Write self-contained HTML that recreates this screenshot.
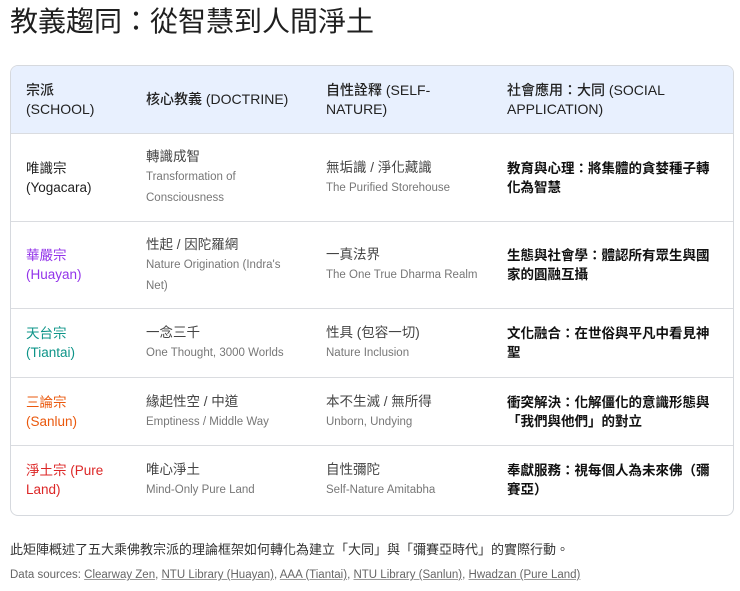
<!DOCTYPE html>
<html><head><meta charset="utf-8"><style>
body{margin:0;background:#fff;font-family:"Liberation Sans","Noto Sans CJK TC",sans-serif;color:#1f1f1f;width:740px;height:591px;overflow:hidden;position:relative}
h1{position:absolute;left:10px;top:3px;margin:0;font-size:28px;font-weight:400;font-family:"Liberation Sans","Noto Sans CJK TC",sans-serif;line-height:38px;white-space:nowrap}
.box{position:absolute;left:10px;top:65px;width:722px;height:449px;border:1px solid #d6d9de;border-radius:8px;overflow:hidden}
table{border-collapse:collapse;width:100%;table-layout:fixed}
td,th{padding:0 4px 0 15px;text-align:left;vertical-align:middle;font-size:13.5px;line-height:19px;border-bottom:1px solid #dadce0}
td:last-child,th:last-child{padding-right:21px}
th{background:#e8f0fe;font-weight:500;height:67px;color:#222;font-size:14px}
tr:last-child td{border-bottom:none}
.s{font-size:11.5px;color:#777;line-height:19px;white-space:nowrap}
.m{color:#444}
.b{font-weight:700;color:#111}
.p{color:#9333ea}.t{color:#0d9488}.o{color:#ea580c}.r{color:#dc2626}
.note{position:absolute;left:10px;top:539px;font-size:13px;color:#333}
.src{position:absolute;left:10px;top:569px;font-size:11.5px;color:#666}
.src u{text-decoration-color:#999}
</style></head><body>
<h1>教義趨同：從智慧到人間淨土</h1>
<div class="box"><table>
<colgroup><col style="width:120px"><col style="width:180px"><col style="width:181px"><col></colgroup>
<tr><th>宗派<br>(SCHOOL)</th><th>核心教義 (DOCTRINE)</th><th>自性詮釋 (SELF-<br>NATURE)</th><th>社會應用：大同 (SOCIAL<br>APPLICATION)</th></tr>
<tr style="height:88px"><td>唯識宗<br>(Yogacara)</td><td><span class="m">轉識成智</span><br><span class="s">Transformation of<br>Consciousness</span></td><td><span class="m">無垢識 / 淨化藏識</span><br><span class="s">The Purified Storehouse</span></td><td class="b">教育與心理：將集體的貪婪種子轉化為智慧</td></tr>
<tr style="height:87px"><td class="p">華嚴宗<br>(Huayan)</td><td><span class="m">性起 / 因陀羅網</span><br><span class="s">Nature Origination (Indra's<br>Net)</span></td><td><span class="m">一真法界</span><br><span class="s">The One True Dharma Realm</span></td><td class="b">生態與社會學：體認所有眾生與國家的圓融互攝</td></tr>
<tr style="height:69px"><td class="t">天台宗<br>(Tiantai)</td><td><span class="m">一念三千</span><br><span class="s">One Thought, 3000 Worlds</span></td><td><span class="m">性具 (包容一切)</span><br><span class="s">Nature Inclusion</span></td><td class="b">文化融合：在世俗與平凡中看見神聖</td></tr>
<tr style="height:68px"><td class="o">三論宗<br>(Sanlun)</td><td><span class="m">緣起性空 / 中道</span><br><span class="s">Emptiness / Middle Way</span></td><td><span class="m">本不生滅 / 無所得</span><br><span class="s">Unborn, Undying</span></td><td class="b">衝突解決：化解僵化的意識形態與「我們與他們」的對立</td></tr>
<tr style="height:68px"><td class="r">淨土宗 (Pure<br>Land)</td><td><span class="m">唯心淨土</span><br><span class="s">Mind-Only Pure Land</span></td><td><span class="m">自性彌陀</span><br><span class="s">Self-Nature Amitabha</span></td><td class="b">奉獻服務：視每個人為未來佛（彌賽亞）</td></tr>
</table></div>
<div class="note">此矩陣概述了五大乘佛教宗派的理論框架如何轉化為建立「大同」與「彌賽亞時代」的實際行動。</div>
<div class="src">Data sources: <u>Clearway Zen</u>, <u>NTU Library (Huayan)</u>, <u>AAA (Tiantai)</u>, <u>NTU Library (Sanlun)</u>, <u>Hwadzan (Pure Land)</u></div>
</body></html>
